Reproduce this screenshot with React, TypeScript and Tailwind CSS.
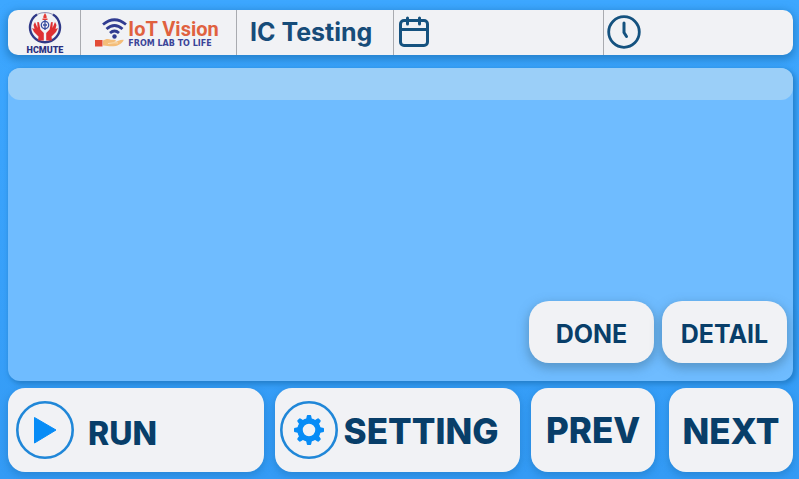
import type { ButtonHTMLAttributes } from "react";

function UniversityLogo() {
  return (
    <div className="flex flex-col items-center text-[#29307f]">
      <svg width="34" height="34" viewBox="0 0 34 34" aria-hidden="true">
        <path d="M9 3.5A15 15 0 1 0 25 3.5" fill="none" stroke="#303987" strokeWidth="2.4" />
        <path d="M9 3.5Q17 -0.5 25 3.5" fill="none" stroke="#8d91b6" strokeWidth="1" />
        <path d="M17 2c1 2 2 3 1.600 5h-3.200c-.5-2 .8-3 1.600-5z" fill="#e43a37" />
        <path d="M14.500 7.500h5v1.500h-5z" fill="#e43a37" />
        <circle cx="17" cy="14" r="3.700" fill="#f1f1f5" stroke="#3950a0" strokeWidth="1.300" />
        <path d="M17 9v10M15 14h4" stroke="#3950a0" strokeWidth="1.300" />
        <path
          d="M5.500 14l1.500-3 2.500 6-.2-6 1.700.2 1.400 7.300 3.400 3.500v7.500H10l.5-4-4.500-4.500L4 17l2.500 1z"
          fill="#df3032"
        />
        <path
          d="M28.500 14l-1.500-3-2.500 6 .2-6-1.700.2-1.400 7.300-3.400 3.500v7.500H24l-.5-4 4.500-4.500 2-4-2.500 1z"
          fill="#df3032"
        />
      </svg>
      <span className="font-[Roboto,sans-serif] text-[9px] leading-[10px] font-black">HCMUTE</span>
    </div>
  );
}

function VisionLogo() {
  return (
    <div className="flex items-center">
      <svg width="34" height="30" viewBox="0 0 34 30" aria-hidden="true">
        <g fill="none" stroke="#303c91" strokeWidth="2.800">
          <path d="M9 6.500Q20.500-3 32 6.500" />
          <path d="M12.500 11Q20.500 4 28.500 11" />
          <path d="M16 15Q20.500 11 25 15" />
        </g>
        <circle cx="20.500" cy="18.500" r="2.200" fill="#303c91" />
        <path d="M1 22h7.500v6.500H1z" fill="#e34c37" />
        <path
          d="M9 22.500c3-2 5.500-2 8-.7 2.500-.3 5-.3 5 1.200l-2 1c3 0 6-2.500 9.500-2.200.8.900-3.500 5.500-7.500 6.200-5 .5-8 .2-13-.5z"
          fill="#f4bd79"
        />
        <path d="M14 25.500l6-.7 4 .2" fill="none" stroke="#fae0b8" strokeWidth="1" />
      </svg>
      <div className="flex flex-col whitespace-nowrap">
        <span className="font-[Roboto,sans-serif] text-[20px] leading-[22px] font-bold text-[#e0613f]">IoT Vision</span>
        <span className="font-['DejaVu_Sans',sans-serif] text-[8px] leading-[8px] font-bold text-[#3b4498]">FROM LAB TO LIFE</span>
      </div>
    </div>
  );
}

function CalendarIcon() {
  return (
    <svg width="32" height="32" viewBox="0 0 32 32" fill="none" stroke="#15527f" strokeWidth="3" strokeLinecap="round" aria-hidden="true">
      <rect x="2.500" y="4.500" width="27" height="25" rx="3.500" />
      <path d="M3 13.500h26M9.500 2v6M21.500 2v6" />
    </svg>
  );
}

function ClockIcon() {
  return (
    <svg width="34" height="34" viewBox="0 0 34 34" fill="none" stroke="#15527f" strokeLinecap="round" strokeLinejoin="round" aria-hidden="true">
      <circle cx="17" cy="17" r="15.300" strokeWidth="2.800" />
      <path d="M17 8v9.500l2.500 4" strokeWidth="3" />
    </svg>
  );
}

function PlayIcon() {
  return (
    <svg width="58" height="58" viewBox="0 0 58 58" className="shrink-0" aria-hidden="true">
      <circle cx="29" cy="29" r="27.700" fill="none" stroke="#2087d8" strokeWidth="2.600" />
      <path d="M18.500 16.500L40 29 18.500 42z" fill="#078cf6" stroke="#078cf6" strokeLinejoin="round" />
    </svg>
  );
}

function GearIcon() {
  const teeth = [0, 45, 90, 135, 180, 225, 270, 315];
  return (
    <svg width="58" height="58" viewBox="0 0 58 58" className="shrink-0" aria-hidden="true">
      <circle cx="29" cy="29" r="27.700" fill="none" stroke="#2087d8" strokeWidth="2.600" />
      <circle cx="29" cy="29" r="9" fill="none" stroke="#078cf6" strokeWidth="5.500" />
      {teeth.map((angle) => (
        <path
          key={angle}
          d="M26 19l.7-3.700q.2-1.300 1-1.300h2.600q.8 0 1 1.300l.7 3.700z"
          fill="#078cf6"
          transform={`rotate(${angle} 29 29)`}
        />
      ))}
    </svg>
  );
}

function PanelButton({ className = "", ...props }: ButtonHTMLAttributes<HTMLButtonElement>) {
  return (
    <button
      type="button"
      className={`flex items-center bg-[#f1f2f5] text-[#083e69] ${className}`}
      {...props}
    />
  );
}

export default function App() {
  return (
    <main className="flex min-h-screen flex-col bg-linear-to-b from-[#3da7ff] to-[#349bf5] pt-[10px] pr-[6px] pb-[7px] pl-[8px] font-[Inter,sans-serif]">
      <header className="flex h-[45px] shrink-0 divide-x divide-[#a9abb0] rounded-[10px] bg-[#f1f2f5] shadow-[0_3px_8px_2px_#176bae99]">
        <div className="flex w-[73px] shrink-0 items-center justify-center pl-[2px]">
          <UniversityLogo />
        </div>
        <div className="flex w-[156px] shrink-0 items-center justify-center pr-[4px]">
          <VisionLogo />
        </div>
        <h1 className="flex w-[157px] shrink-0 items-center pb-[2px] pl-[13px] text-[25px] leading-[30px] font-bold whitespace-nowrap text-[#174c79]">
          IC Testing
        </h1>
        <div className="flex w-[210px] shrink items-center pb-[2px] pl-[4px]">
          <CalendarIcon />
        </div>
        <div className="flex flex-1 items-center pb-[2px] pl-[3px]">
          <ClockIcon />
        </div>
      </header>

      <section className="mt-[13px] flex flex-1 flex-col rounded-[12px] bg-[#6fbcff] shadow-[2px_2px_5px_1px_#176bae99]">
        <div className="h-[32px] rounded-[12px] bg-[#9bcff8]" />
        <div className="mt-auto flex justify-end gap-[8px] pr-[6px] pb-[18px]">
          <PanelButton className="h-[62px] w-[125px] justify-center rounded-[20px] pt-[6px] text-[25px] font-bold shadow-[0_4px_10px_2px_#44779e80]">
            DONE
          </PanelButton>
          <PanelButton className="h-[62px] w-[125px] justify-center rounded-[20px] pt-[6px] text-[25px] font-bold shadow-[0_4px_10px_2px_#44779e80]">
            DETAIL
          </PanelButton>
        </div>
      </section>

      <nav aria-label="Test controls" className="mt-[7px] flex h-[84px] shrink-0 gap-[14px]">
        <div className="grid flex-1 grid-cols-[256fr_246fr_124fr] gap-[11px]">
          <PanelButton className="gap-[14px] rounded-[17px] pl-[8px] text-[32px] font-extrabold shadow-[0_3px_7px_1px_#176bae66]">
            <PlayIcon />
            <span className="pt-[8px]">RUN</span>
          </PanelButton>
          <PanelButton className="gap-[6px] rounded-[17px] pl-[5px] text-[35px] font-extrabold shadow-[0_3px_7px_1px_#176bae66]">
            <GearIcon />
            <span className="pt-[2px]">SETTING</span>
          </PanelButton>
          <PanelButton className="justify-center rounded-[17px] text-[35px] font-extrabold shadow-[0_3px_7px_1px_#176bae66]">PREV</PanelButton>
        </div>
        <PanelButton className="w-[124px] justify-center rounded-[17px] pt-[2px] text-[35px] font-extrabold shadow-[0_3px_7px_1px_#176bae66]">NEXT</PanelButton>
      </nav>
    </main>
  );
}
